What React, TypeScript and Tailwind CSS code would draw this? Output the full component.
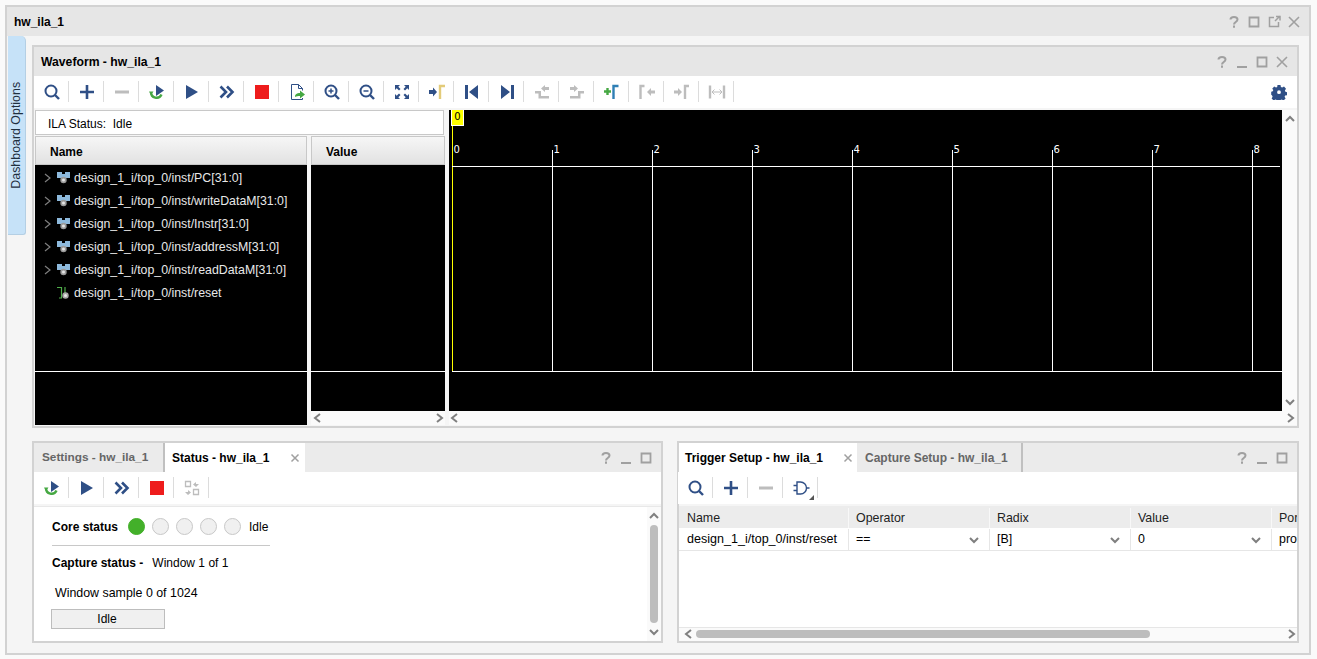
import React from 'react';

const blue = '#2f4f86';
const gray = '#bdbdbd';

// toolbar glyphs, all on a 20x20 box
function Glass({ mark, color = blue }: { mark?: 'plus' | 'minus'; color?: string }) {
  return (
    <svg width="20" height="20" viewBox="0 0 20 20" fill="none" stroke={color} strokeWidth="2">
      <circle cx="9" cy="9" r="5.5" />
      <path d="M13 13l4 4" strokeWidth="2.4" />
      {mark && <path d="M6.5 9h5" strokeWidth="1.5" />}
      {mark === 'plus' && <path d="M9 6.5v5" strokeWidth="1.5" />}
    </svg>
  );
}

function Plus() {
  return (
    <svg width="20" height="20" viewBox="0 0 20 20" fill={blue}>
      <path d="M3 8.7h5.7V3h2.6v5.7H17v2.6h-5.7V17H8.7v-5.7H3z" />
    </svg>
  );
}

function Minus() {
  return (
    <svg width="20" height="20" viewBox="0 0 20 20" fill={gray}>
      <path d="M3 8.5h14v3H3z" />
    </svg>
  );
}

function RunLoop() {
  return (
    <svg width="20" height="20" viewBox="0 0 20 20" fill="none">
      <path d="M4 10a5.5 5.5 0 0 0 10.5 2.5" stroke="#46a843" strokeWidth="2.4" />
      <path d="M2 9.5h4.5L4 13z" fill="#46a843" />
      <path d="M9 3l8 5.5-8 5.5z" fill={blue} />
    </svg>
  );
}

function Play() {
  return (
    <svg width="20" height="20" viewBox="0 0 20 20" fill={blue}>
      <path d="M4 3l12 7-12 7z" />
    </svg>
  );
}

function Forward() {
  return (
    <svg width="20" height="20" viewBox="0 0 20 20" fill="none" stroke={blue} strokeWidth="2.6">
      <path d="M3.5 4.5L9 10l-5.5 5.5M10 4.5l5.5 5.5-5.5 5.5" />
    </svg>
  );
}

function Stop() {
  return (
    <svg width="20" height="20" viewBox="0 0 20 20" fill="#ee1c1c">
      <path d="M3 3h14v14H3z" />
    </svg>
  );
}

function Export() {
  return (
    <svg width="20" height="20" viewBox="0 0 20 20" fill="none">
      <path d="M4.500 2.500h7l4 4v2M15.500 16v1.500h-11v-15" stroke={blue} strokeWidth="1" />
      <path d="M11.500 2.500v4h4" stroke={blue} strokeWidth="1" />
      <path d="M8 15c0-3 2-4 5-4V8.500l5 4-5 4V14c-2 0-3.500 0-5 1z" fill="#46a843" />
    </svg>
  );
}

function Fit() {
  return (
    <svg width="20" height="20" viewBox="0 0 20 20" fill={blue}>
      <path d="M3 3h5L6.300 4.700 8.500 7 7 8.500 4.700 6.300 3 8zM17 3v5l-1.700-1.700L13 8.500 11.500 7l2.200-2.300L12 3zM3 17v-5l1.700 1.700L7 11.500 8.500 13l-2.200 2.300L8 17zM17 17h-5l1.700-1.700-2.200-2.300 1.500-1.500 2.300 2.200L17 12z" />
    </svg>
  );
}

function GotoCursor() {
  return (
    <svg width="20" height="20" viewBox="0 0 20 20" fill="none">
      <path d="M2 8h4V5.500L10 10l-4 4.500V12H2z" fill={blue} />
      <path d="M13 17V4h5" stroke="#e3cb79" strokeWidth="2.4" />
    </svg>
  );
}

function Edge({ end }: { end?: boolean }) {
  return (
    <svg width="20" height="20" viewBox="0 0 20 20" fill={blue}>
      {end ? <path d="M4 3l9 7-9 7zM14 3h3v14h-3z" /> : <path d="M16 3l-9 7 9 7zM3 3h3v14H3z" />}
    </svg>
  );
}

function Step({ right }: { right?: boolean }) {
  return (
    <svg width="20" height="20" viewBox="0 0 20 20" fill={gray}>
      {right ? (
        <path d="M3 5h4V3l4 3.500L7 10V8H3zM3 14h8V9h6v2.500h-3.500V16.500H3z" />
      ) : (
        <path d="M17 5h-4V3L9 6.500 13 10V8h4zM3 9h6v5h8v2.500H6.500v-5H3z" />
      )}
    </svg>
  );
}

function AddMarker() {
  return (
    <svg width="20" height="20" viewBox="0 0 20 20" fill="none">
      <path d="M2 9.500h7M5.500 6v7" stroke="#46a843" strokeWidth="2.400" />
      <path d="M11.500 17V4h5" stroke="#2f7fb5" strokeWidth="2.400" />
    </svg>
  );
}

function MarkerArrow({ right }: { right?: boolean }) {
  return (
    <svg width="20" height="20" viewBox="0 0 20 20" fill="none">
      {right ? (
        <>
          <path d="M2 8.500h4V6l4 4-4 4v-2.500H2z" fill={gray} />
          <path d="M13 17V4h4" stroke={gray} strokeWidth="2.400" />
        </>
      ) : (
        <>
          <path d="M3.500 17V4h4" stroke={gray} strokeWidth="2.400" />
          <path d="M18 8.500h-4V6l-4 4 4 4v-2.500h4z" fill={gray} />
        </>
      )}
    </svg>
  );
}

function Span() {
  return (
    <svg width="20" height="20" viewBox="0 0 20 20" fill="none" stroke={gray}>
      <path d="M3 3.500v13M17 3.500v13" strokeWidth="2.400" />
      <path d="M5 10h10M5 10l2.500-2.500M5 10l2.500 2.500M15 10l-2.500-2.500M15 10l-2.500 2.500" />
    </svg>
  );
}

function Swap() {
  return (
    <svg width="20" height="20" viewBox="0 0 20 20" fill="none" stroke={gray}>
      <path d="M3.500 3.500h5v5h-5zM11.500 11.500h5v5h-5z" strokeWidth="1.300" />
      <path d="M11 6h3V4l3 2.500L14 9" fill={gray} stroke="none" transform="matrix(-1 0 0 1 28 0)" />
      <path d="M9 14H6v-2l-3 2.500L6 17" fill={gray} stroke="none" transform="matrix(-1 0 0 1 12 0)" />
    </svg>
  );
}

function Gate() {
  return (
    <svg width="20" height="20" viewBox="0 0 20 20" fill="none" stroke={blue} strokeWidth="1.400">
      <path d="M6 4h3.500a6 6 0 0 1 0 12H6z" />
      <path d="M2.500 7.500H6M2.500 12.500H6M15.500 10h3" />
    </svg>
  );
}

function Gear() {
  return (
    <svg width="16" height="16" viewBox="0 0 16 16" fill={blue}>
      <path
        fillRule="evenodd"
        d="M6.500 1h3l.4 2 1.300.6L13 2.500l2 2.200-1.100 1.700.5 1.300 1.600.5v3l-1.900.4-.5 1.200 1 1.700-2.100 2-1.700-1-1.300.5-.4 1.900h-3l-.4-1.900-1.300-.5-1.700 1-2.100-2 1-1.700-.5-1.200L.2 10.700v-3l1.600-.5.500-1.300L1.200 4.700l2-2.200 1.800 1.100 1.200-.6zM8 6.300a1.900 1.900 0 1 0 0 3.800 1.900 1.900 0 0 0 0-3.800z"
      />
    </svg>
  );
}

// signal tree icons
function Bus() {
  return (
    <svg width="13" height="14" viewBox="0 0 13 14">
      <path d="M0 1h5v2h3V1h5v6H8.500L8 8H5l-.5-1H0z" fill="#8db9dc" />
      <circle cx="6.500" cy="9" r="3.200" fill="#9a9a9a" />
      <circle cx="6.500" cy="9" r="1.500" fill="#e4e4e4" />
    </svg>
  );
}

function Wire() {
  return (
    <svg width="13" height="14" viewBox="0 0 13 14" fill="none">
      <path d="M0 1.500h4.500V12H2" stroke="#4fae4a" strokeWidth="1.200" />
      <path d="M8 1v6" stroke="#4fae4a" strokeWidth="1.200" />
      <circle cx="8.500" cy="9.500" r="3.200" fill="#a8a8a8" />
      <circle cx="8.500" cy="9.500" r="1.500" fill="#e8e8e8" />
    </svg>
  );
}

// window controls
function Controls({ items }: { items: string }) {
  return (
    <div className="flex items-center gap-[6px]">
      {items.split('').map((c, i) => (
        <svg key={i} width="14" height="14" viewBox="0 0 14 14" fill="none" stroke="#a0a0a0" strokeWidth="1.800">
          {c === '?' && <path d="M3.500 4.500C3.500 1 10.500 1 10.500 4.500c0 2.500-3.500 2.500-3.500 5M7 10.500v2.300" strokeWidth="2" />}
          {c === '_' && <path d="M2 12h10" strokeWidth="2" />}
          {c === 'o' && <path d="M2.500 2.500h9v9h-9z" />}
          {c === 'p' && <path d="M7 2.500H2.500v9h9V7M8 6l5-5M9 1.500h4v4" strokeWidth="1.500" />}
          {c === 'x' && <path d="M2 2l10 10M12 2L2 12" strokeWidth="1.600" />}
        </svg>
      ))}
    </div>
  );
}

function Toolbar({ children, className = '' }: { children: React.ReactNode; className?: string }) {
  return <div className={`flex items-center h-[32px] bg-white shrink-0 ${className}`}>{children}</div>;
}

function Btn({ children, last }: { children: React.ReactNode; last?: boolean }) {
  return (
    <div className="w-[35px] h-[32px] flex items-center justify-center relative shrink-0">
      {children}
      {!last && <span className="absolute right-0 top-[5px] h-[21px] w-px bg-[#dcdcdc]" />}
    </div>
  );
}

function Chev({ dir, thin, className = '' }: { dir: 'l' | 'r' | 'u' | 'd'; thin?: boolean; className?: string }) {
  const d = { l: 'M8 2L3 6l5 4', r: 'M4 2l5 4-5 4', u: 'M2 8l4-4 4 4', d: 'M2 4l4 4 4-4' }[dir];
  return (
    <svg width="12" height="12" viewBox="0 0 12 12" fill="none" stroke="#7f7f7f" strokeWidth={thin ? 1.2 : 2} className={className}>
      <path d={d} />
    </svg>
  );
}

const signals = ['PC[31:0]', 'writeDataM[31:0]', 'Instr[31:0]', 'addressM[31:0]', 'readDataM[31:0]', 'reset'];
const ticks = [0, 1, 2, 3, 4, 5, 6, 7, 8];

function Waveform() {
  return (
    <div className="flex-1 min-w-0 relative h-[301px] bg-black">
      <svg width="833" height="301" className="block">
        <path d="M3.500 14V261.500H833" fill="none" stroke="#ffff00" />
        <path d="M3 56.500H831" stroke="#fff" />
        <path d="M3 261.500H833" stroke="#fff" />
        {ticks.slice(1).map(t => (
          <path key={t} d={`M${3.5 + t * 100} 40V261`} stroke="#fff" />
        ))}
        {ticks.map(t => (
          <text key={t} x={4.5 + t * 100} y={43} fill="#fff" fontSize="10" fontFamily="'DejaVu Sans', sans-serif">
            {t}
          </text>
        ))}
      </svg>
      <div className="absolute left-[2px] top-0 w-[13px] h-[16px] bg-[#ffff00] border-x border-b border-white text-[10px] leading-[13px] text-center text-black font-['DejaVu_Sans',sans-serif]">
        0
      </div>
    </div>
  );
}

function Dot({ on }: { on?: boolean }) {
  return (
    <span
      className={`w-[17px] h-[17px] rounded-full border ${on ? 'bg-[#43b02a] border-[#43b02a]' : 'bg-[#f0f0f0] border-[#c8c8c8]'}`}
    />
  );
}

export default function App() {
  return (
    <div className="w-[1317px] h-[659px] bg-[#fafafa] pt-[5px] pl-[5px] font-['Liberation_Sans',Arial,sans-serif] text-[12px] text-black overflow-hidden">
      {/* outer window */}
      <div className="w-[1306px] h-[650px] border-2 border-[#d2d2d2] flex flex-col bg-[#f5f5f5]">
        <div className="h-[29px] bg-[#e6e6e6] flex items-center justify-between pl-[7px] pr-[8px] shrink-0">
          <span className="font-bold">hw_ila_1</span>
          <Controls items="?opx" />
        </div>

        <div className="flex flex-1 min-h-0">
          {/* side tab */}
          <div className="w-[18px] ml-px h-[199px] bg-[#c6e2f8] rounded-tr-[5px] rounded-br-[3px] border-r border-b border-[#b4cfe4] flex items-center justify-center shrink-0">
            <span className="whitespace-nowrap -rotate-90 text-[12.4px] text-[#1f2f3f]">Dashboard Options</span>
          </div>

          <div className="flex-1 min-w-0 pl-[6px] pr-[10px] pt-[9px] flex flex-col">
            {/* waveform panel */}
            <div className="h-[383px] border-2 border-[#d2d2d2] flex flex-col shrink-0">
              <div className="h-[29px] bg-[#e6e6e6] flex items-center justify-between pl-[7px] pr-[8px] shrink-0">
                <span className="font-bold text-[12.2px] pt-px">Waveform - hw_ila_1</span>
                <Controls items="?_ox" />
              </div>
              <Toolbar className="pr-[10px] justify-between">
                <div className="flex">
                  <Btn><Glass /></Btn>
                  <Btn><Plus /></Btn>
                  <Btn><Minus /></Btn>
                  <Btn><RunLoop /></Btn>
                  <Btn><Play /></Btn>
                  <Btn><Forward /></Btn>
                  <Btn><Stop /></Btn>
                  <Btn><Export /></Btn>
                  <Btn><Glass mark="plus" /></Btn>
                  <Btn><Glass mark="minus" /></Btn>
                  <Btn><Fit /></Btn>
                  <Btn><GotoCursor /></Btn>
                  <Btn><Edge /></Btn>
                  <Btn><Edge end /></Btn>
                  <Btn><Step /></Btn>
                  <Btn><Step right /></Btn>
                  <Btn><AddMarker /></Btn>
                  <Btn><MarkerArrow /></Btn>
                  <Btn><MarkerArrow right /></Btn>
                  <Btn><Span /></Btn>
                </div>
                <Gear />
              </Toolbar>
              <div className="flex-1 min-h-0 flex bg-[#f5f5f5] pt-[2px] pl-px pb-px">
                {/* signal names */}
                <div className="w-[410px] shrink-0 flex flex-col">
                  <div className="h-[25px] w-[409px] bg-white border border-[#c8c8c8] pl-[12px] pt-[2px] flex items-center shrink-0">
                    ILA Status:&nbsp; Idle
                  </div>
                  <div className="flex flex-1 gap-[4px] pt-px">
                    <div className="w-[272px] flex flex-col">
                      <div className="h-[29px] pt-[2px] border border-[#c8c8c8] bg-gradient-to-b from-[#f6f6f6] to-[#e2e2e2] flex items-center pl-[14px] font-bold shrink-0">
                        Name
                      </div>
                      <div className="flex-1 bg-black relative pt-[1px]">
                        {signals.map((s, i) => (
                          <div key={s} className="h-[23px] flex items-center text-[12.35px] text-[#e8e8e8]">
                            <span className="w-[22px] pl-[6px] flex items-center">
                              {i < 5 && <Chev dir="r" thin />}
                            </span>
                            <span className="w-[17px] flex items-center">{i < 5 ? <Bus /> : <Wire />}</span>
                            <span className="pt-[2px]">design_1_i/top_0/inst/{s}</span>
                          </div>
                        ))}
                        <div className="absolute left-0 right-0 top-[206px] h-px bg-white" />
                      </div>
                    </div>
                    <div className="w-[134px] flex flex-col">
                      <div className="h-[29px] pt-[2px] border border-[#c8c8c8] bg-gradient-to-b from-[#f6f6f6] to-[#e2e2e2] flex items-center pl-[14px] font-bold shrink-0">
                        Value
                      </div>
                      <div className="flex-1 bg-black relative">
                        <div className="absolute left-0 right-0 top-[206px] h-px bg-white" />
                      </div>
                      <div className="h-[14px] flex items-center justify-between bg-[#fafafa] pl-px shrink-0">
                        <Chev dir="l" />
                        <Chev dir="r" />
                      </div>
                    </div>
                  </div>
                </div>
                {/* wave area */}
                <div className="flex-1 min-w-0 flex flex-col pl-[4px]">
                  <div className="flex">
                    <Waveform />
                    <div className="w-[15px] h-[301px] bg-[#fafafa] flex flex-col items-center justify-between py-[3px]">
                      <Chev dir="u" />
                      <Chev dir="d" />
                    </div>
                  </div>
                  <div className="h-[14px] flex items-center justify-between bg-[#fafafa] pr-[1px]">
                    <Chev dir="l" />
                    <Chev dir="r" />
                  </div>
                </div>
              </div>
            </div>

            {/* bottom panels */}
            <div className="flex gap-[14px] mt-[13px] h-[202px]">
              <div className="w-[631px] border-2 border-[#d2d2d2] flex flex-col shrink-0">
                <div className="h-[29px] bg-[#ebebeb] flex items-stretch pl-[2px] pr-[8px] shrink-0 font-bold">
                  <div className="w-[129px] pl-[6px] flex items-center text-[11.8px] text-[#666] border-r-2 border-[#c0c0c0]">
                    Settings - hw_ila_1
                  </div>
                  <div className="w-[140px] bg-white pl-[7px] flex items-center justify-between pr-[5px]">
                    Status - hw_ila_1
                    <svg width="10" height="10" viewBox="0 0 10 10" stroke="#a0a0a0" strokeWidth="1.500">
                      <path d="M1.500 1.500l7 7M8.500 1.500l-7 7" />
                    </svg>
                  </div>
                  <div className="flex-1 flex items-center justify-end">
                    <Controls items="?_o" />
                  </div>
                </div>
                <Toolbar>
                  <Btn><RunLoop /></Btn>
                  <Btn><Play /></Btn>
                  <Btn><Forward /></Btn>
                  <Btn><Stop /></Btn>
                  <Btn><Swap /></Btn>
                </Toolbar>
                <div className="flex-1 min-h-0 mt-[2px] bg-white flex border-t border-[#e8e8e8]">
                  <div className="flex-1 pl-[18px]">
                    <div className="h-[39px] w-[218px] border-b border-[#c8c8c8] flex items-center">
                      <span className="font-bold mr-[10px] pt-px">Core status</span>
                      <span className="flex gap-[7px] items-center">
                        <Dot on />
                        <Dot />
                        <Dot />
                        <Dot />
                        <Dot />
                      </span>
                      <span className="ml-[8px] pt-px">Idle</span>
                    </div>
                    <div className="mt-[9px] leading-[16px]">
                      <span className="font-bold">Capture status -</span>
                      <span className="ml-[9px]">Window 1 of 1</span>
                    </div>
                    <div className="mt-[14px] ml-[3px] leading-[16px] text-[12.4px]">Window sample 0 of 1024</div>
                    <div className="mt-[8px] -ml-px w-[114px] h-[20px] border border-[#bdbdbd] bg-[#f0f0f0] flex items-center justify-center pr-[2px]">
                      Idle
                    </div>
                  </div>
                  <div className="w-[14px] bg-[#fafafa] flex flex-col items-center justify-between py-[3px] shrink-0">
                    <div className="flex flex-col items-center">
                      <Chev dir="u" />
                      <div className="w-[8px] h-[98px] mt-[3px] rounded bg-[#bdbdbd]" />
                    </div>
                    <Chev dir="d" />
                  </div>
                </div>
              </div>

              <div className="flex-1 min-w-0 border-2 border-[#d2d2d2] flex flex-col">
                <div className="h-[29px] bg-[#ebebeb] flex items-stretch pr-[8px] shrink-0 font-bold">
                  <div className="w-[178px] bg-white pl-[6px] flex items-center justify-between pr-[4px]">
                    Trigger Setup - hw_ila_1
                    <svg width="10" height="10" viewBox="0 0 10 10" stroke="#a0a0a0" strokeWidth="1.500">
                      <path d="M1.500 1.500l7 7M8.500 1.500l-7 7" />
                    </svg>
                  </div>
                  <div className="w-[166px] pl-[8px] flex items-center text-[#666] border-r-2 border-[#c0c0c0]">
                    Capture Setup - hw_ila_1
                  </div>
                  <div className="flex-1 flex items-center justify-end">
                    <Controls items="?_o" />
                  </div>
                </div>
                <Toolbar className="-ml-px">
                  <Btn><Glass /></Btn>
                  <Btn><Plus /></Btn>
                  <Btn><Minus /></Btn>
                  <div className="relative">
                    <Btn><Gate /></Btn>
                    <span className="absolute right-[4px] bottom-[4px] w-0 h-0 border-l-[5px] border-l-transparent border-b-[5px] border-b-[#555]" />
                  </div>
                </Toolbar>
                <div className="flex-1 min-h-0 mt-[2px] bg-white flex flex-col overflow-hidden">
                  <div className="h-[22px] pt-[2px] bg-[#ececec] flex shrink-0 text-[12.4px] text-[#222]">
                    <div className="w-[170px] pl-[8px] flex items-center border-r border-[#f8f8f8] shrink-0">Name</div>
                    <div className="w-[141px] pl-[7px] flex items-center border-r border-[#f8f8f8] shrink-0">Operator</div>
                    <div className="w-[141px] pl-[7px] flex items-center border-r border-[#f8f8f8] shrink-0">Radix</div>
                    <div className="w-[141px] pl-[7px] flex items-center border-r border-[#f8f8f8] shrink-0">Value</div>
                    <div className="flex-1 pl-[7px] flex items-center overflow-hidden">Port</div>
                  </div>
                  <div className="h-[23px] pt-px flex shrink-0 border-b border-[#e6e6e6] text-[12.4px]">
                    <div className="w-[170px] pl-[8px] flex items-center border-r border-[#e6e6e6] shrink-0 text-[12.55px] whitespace-nowrap">design_1_i/top_0/inst/reset</div>
                    <div className="w-[141px] pl-[7px] pr-[9px] flex items-center justify-between border-r border-[#e6e6e6] shrink-0">==<Chev dir="d" /></div>
                    <div className="w-[141px] pl-[7px] pr-[9px] flex items-center justify-between border-r border-[#e6e6e6] shrink-0">[B]<Chev dir="d" /></div>
                    <div className="w-[141px] pl-[7px] pr-[9px] flex items-center justify-between border-r border-[#e6e6e6] shrink-0">0<Chev dir="d" /></div>
                    <div className="flex-1 pl-[7px] flex items-center overflow-hidden">probe0</div>
                  </div>
                  <div className="flex-1" />
                  <div className="h-[14px] bg-[#fafafa] border-t border-[#e6e6e6] flex items-center justify-between pl-[4px] pb-px shrink-0">
                    <Chev dir="l" />
                    <div className="absolute ml-[13px] w-[454px] h-[8px] rounded bg-[#bdbdbd]" />
                    <Chev dir="r" />
                  </div>
                </div>
              </div>
            </div>
          </div>
        </div>
      </div>
    </div>
  );
}
